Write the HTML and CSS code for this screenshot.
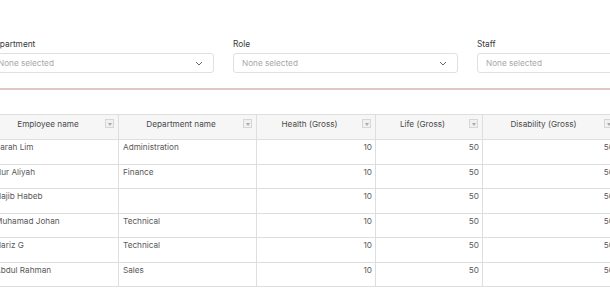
FILE: index.html
```html
<!DOCTYPE html>
<html lang="en">
<head>
    <meta charset="UTF-8">
    <meta name="viewport" content="width=device-width, initial-scale=1.0">
    <title>Benefits report</title>
    <link rel="stylesheet" href="styles.css">
</head>
<body>
    <div class="page">
        <div class="filters">
            <div class="filter">
                <label>Department</label>
                <div class="select">
                    <span>None selected</span>
                    <svg class="chevron" width="8" height="5" viewBox="0 0 8 5"><path d="M1 1l3 3 3-3" fill="none" stroke="#666" stroke-width="1"/></svg>
                </div>
            </div>
            <div class="filter">
                <label>Role</label>
                <div class="select">
                    <span>None selected</span>
                    <svg class="chevron" width="8" height="5" viewBox="0 0 8 5"><path d="M1 1l3 3 3-3" fill="none" stroke="#666" stroke-width="1"/></svg>
                </div>
            </div>
            <div class="filter">
                <label>Staff</label>
                <div class="select">
                    <span>None selected</span>
                    <svg class="chevron" width="8" height="5" viewBox="0 0 8 5"><path d="M1 1l3 3 3-3" fill="none" stroke="#666" stroke-width="1"/></svg>
                </div>
            </div>
        </div>

        <div class="divider"></div>

        <table class="grid">
            <colgroup>
                <col style="width:128px">
                <col style="width:138px">
                <col style="width:119px">
                <col style="width:107px">
                <col style="width:135px">
            </colgroup>
            <thead>
                <tr>
                    <th><span>Employee name</span><i class="funnel"></i></th>
                    <th><span>Department name</span><i class="funnel"></i></th>
                    <th><span>Health (Gross)</span><i class="funnel"></i></th>
                    <th><span>Life (Gross)</span><i class="funnel"></i></th>
                    <th><span>Disability (Gross)</span><i class="funnel"></i></th>
                </tr>
            </thead>
            <tbody>
                <tr><td>Sarah Lim</td><td>Administration</td><td class="num">10</td><td class="num">50</td><td class="num">50</td></tr>
                <tr><td>Nur Aliyah</td><td>Finance</td><td class="num">10</td><td class="num">50</td><td class="num">50</td></tr>
                <tr><td>Najib Habeb</td><td></td><td class="num">10</td><td class="num">50</td><td class="num">50</td></tr>
                <tr><td>Muhamad Johan</td><td>Technical</td><td class="num">10</td><td class="num">50</td><td class="num">50</td></tr>
                <tr><td>Hariz G</td><td>Technical</td><td class="num">10</td><td class="num">50</td><td class="num">50</td></tr>
                <tr><td>Abdul Rahman</td><td>Sales</td><td class="num">10</td><td class="num">50</td><td class="num">50</td></tr>
            </tbody>
        </table>
    </div>
</body>
</html>
```

FILE: styles.css
```css
body {
    margin: 0;
    font-family: Inter, "Noto Sans", sans-serif;
    background: #fff;
    color: #555;
    overflow: hidden;
}
.page {
    margin-left: -11px;
    width: 660px;
}
.filters {
    display: grid;
    grid-template-columns: 225px 225px 225px;
    column-gap: 19px;
    padding-top: 38px;
}
.filter label {
    display: block;
    font-size: 8.3px;
    line-height: 12px;
    color: #3a3a3a;
    margin-bottom: 3px;
}
.select {
    height: 20px;
    box-sizing: border-box;
    border: 1px solid #e0e0e0;
    border-radius: 3px;
    display: flex;
    align-items: center;
    justify-content: space-between;
    padding: 0 10px 0 8px;
    font-size: 8.2px;
    color: #a8a8a8;
}
.chevron {
    display: block;
}
.divider {
    margin-top: 15px;
    margin-left: 11px;
    border-top: 2px solid #e2c7c3;
}
.grid {
    margin-top: 24px;
    margin-left: 1px;
    border-collapse: collapse;
    table-layout: fixed;
    font-size: 8.2px;
}
.grid th,
.grid td {
    border: 1px solid #dedede;
    vertical-align: top;
    box-sizing: border-box;
}
.grid th {
    position: relative;
    background: #f6f6f6;
    font-weight: normal;
    color: #4a4a4a;
    height: 25px;
    padding: 3px 4px 0 4px;
    line-height: 12px;
}
.grid th span {
    display: flex;
    justify-content: center;
    padding-right: 13px;
}
.funnel {
    position: absolute;
    right: 4px;
    top: 4px;
    width: 9px;
    height: 9px;
    box-sizing: border-box;
    border: 1px solid #d6d6d6;
    background: #f0f0f0;
}
.funnel::after {
    content: "";
    position: absolute;
    left: 1.5px;
    top: 2.5px;
    border-left: 2px solid transparent;
    border-right: 2px solid transparent;
    border-top: 3px solid #aaa;
}
.grid td {
    height: 24.5px;
    padding: 1px 4px 0 4px;
    line-height: 12px;
    color: #595959;
}
.grid td.num {
    text-align: right;
    padding-right: 3px;
}
```
